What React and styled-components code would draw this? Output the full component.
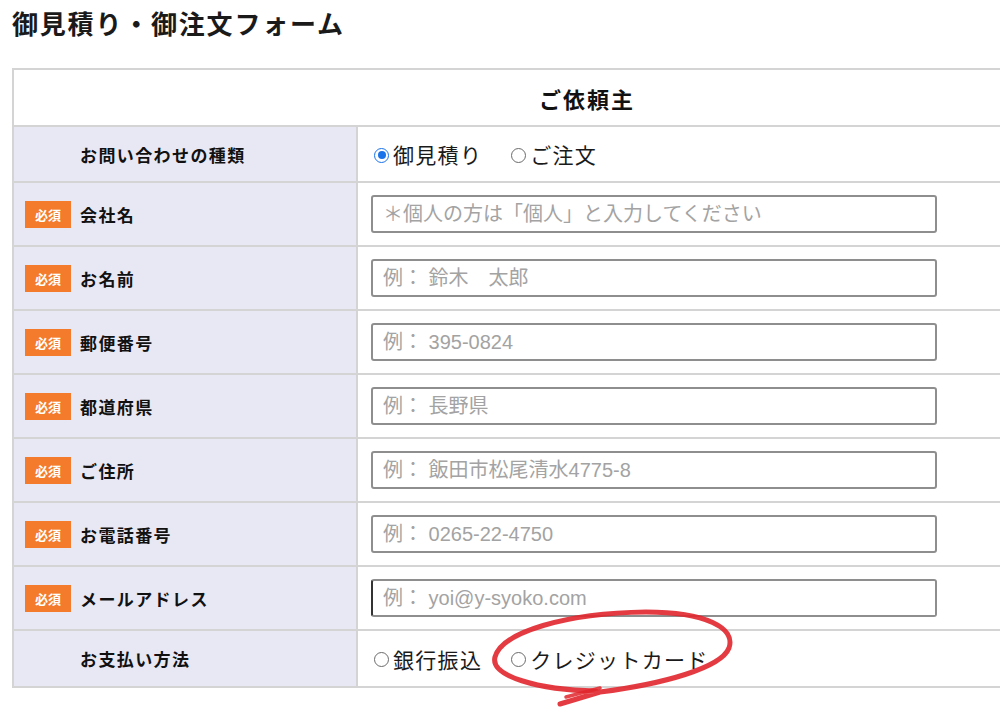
import React from 'react'
import styled, { createGlobalStyle } from 'styled-components'

const GlobalStyle = createGlobalStyle`
  html, body {
    margin: 0;
    padding: 0;
    background: #fff;
    overflow: hidden;
  }
  body {
    font-family: "Liberation Sans", "Noto Sans CJK JP", sans-serif;
    color: #111;
  }
`

const Page = styled.div`
  position: relative;
  width: 1000px;
  height: 714px;
  padding: 0 0 0 12px;
  box-sizing: border-box;
  overflow: hidden;
`

const Title = styled.h1`
  margin: 0;
  padding: 8px 0 0 0;
  height: 68px;
  box-sizing: border-box;
  font-size: 26px;
  line-height: 30px;
  font-weight: 700;
  letter-spacing: 1.8px;
  font-family: "Noto Sans CJK JP", sans-serif;
  color: #1a1a1a;
`

const Table = styled.div`
  width: 1146px;
  border-top: 2px solid #d4d4d4;
  border-left: 2px solid #d4d4d4;
  display: flex;
  flex-direction: column;
`

const HeadRow = styled.div`
  height: 57px;
  box-sizing: border-box;
  border-bottom: 2px solid #d4d4d4;
  display: flex;
  align-items: center;
  justify-content: center;
  font-family: "Noto Sans CJK JP", sans-serif;
  font-size: 22px;
  font-weight: 700;
  letter-spacing: 2px;
`

const Row = styled.div`
  display: grid;
  grid-template-columns: 344px 1fr;
  height: ${p => p.$h}px;
  box-sizing: border-box;
  border-bottom: 2px solid #d4d4d4;
`

const LabelCell = styled.div`
  background: #e8e8f4;
  border-right: 2px solid #d4d4d4;
  display: flex;
  align-items: center;
  gap: 9px;
  padding-left: 11px;
  font-family: "Noto Sans CJK JP", sans-serif;
  font-size: 17px;
  font-weight: 700;
  letter-spacing: 1.4px;
`

const Badge = styled.span`
  width: 46px;
  height: 27px;
  display: flex;
  align-items: center;
  justify-content: center;
  background: ${p => (p.$empty ? 'transparent' : '#f47b2b')};
  color: #fff;
  font-size: 13px;
  font-weight: 700;
  letter-spacing: 0;
`

const FieldCell = styled.div`
  display: flex;
  align-items: center;
  padding-left: 13px;
`

const Input = styled.input`
  width: 566px;
  height: 38px;
  box-sizing: border-box;
  border: 2px solid #8e8e8e;
  border-radius: 3px;
  padding: 0 0 0 10px;
  font-family: "Liberation Sans", "Noto Sans CJK JP", sans-serif;
  font-size: 20px;
  outline: none;
  border-left-color: ${p => (p.$caret ? '#333' : '#8e8e8e')};
  &::placeholder {
    color: #a3a3a3;
  }
`

const Choices = styled.div`
  display: flex;
  align-items: center;
  gap: 29px;
  padding-left: 3px;
  font-family: "Noto Sans CJK JP", sans-serif;
  font-size: 21px;
  letter-spacing: 1.3px;
`

const Choice = styled.label`
  display: flex;
  align-items: center;
  gap: 4px;
  color: #1a1a1a;
`

const Dot = styled.span`
  flex-shrink: 0;
  width: 15px;
  height: 15px;
  margin-top: 2px;
  box-sizing: border-box;
  border-radius: 50%;
  border: 1.5px solid ${p => (p.$on ? '#1a73e8' : '#6b6b6b')};
  display: flex;
  align-items: center;
  justify-content: center;
  &::after {
    content: '';
    width: 8px;
    height: 8px;
    border-radius: 50%;
    background: ${p => (p.$on ? '#1a73e8' : 'transparent')};
  }
`

const Scribble = styled.svg`
  position: absolute;
  left: 478px;
  top: 600px;
  pointer-events: none;
`

const fields = [
  ['会社名', '＊個人の方は「個人」と入力してください'],
  ['お名前', '例： 鈴木　太郎'],
  ['郵便番号', '例： 395-0824'],
  ['都道府県', '例： 長野県'],
  ['ご住所', '例： 飯田市松尾清水4775-8'],
  ['お電話番号', '例： 0265-22-4750'],
  ['メールアドレス', '例： yoi@y-syoko.com'],
]

function Radios({ items }) {
  return (
    <Choices>
      {items.map(([text, on]) => (
        <Choice key={text}>
          <Dot $on={on} />
          {text}
        </Choice>
      ))}
    </Choices>
  )
}

export default function App() {
  return (
    <Page>
      <GlobalStyle />
      <Title>御見積り・御注文フォーム</Title>
      <Table>
        <HeadRow>ご依頼主</HeadRow>
        <Row $h={56}>
          <LabelCell>
            <Badge $empty />
            お問い合わせの種類
          </LabelCell>
          <FieldCell>
            <Radios items={[['御見積り', true], ['ご注文', false]]} />
          </FieldCell>
        </Row>
        {fields.map(([label, ph], i) => (
          <Row $h={64} key={label}>
            <LabelCell>
              <Badge>必須</Badge>
              {label}
            </LabelCell>
            <FieldCell>
              <Input placeholder={ph} $caret={i === fields.length - 1} />
            </FieldCell>
          </Row>
        ))}
        <Row $h={57}>
          <LabelCell>
            <Badge $empty />
            お支払い方法
          </LabelCell>
          <FieldCell>
            <Radios items={[['銀行振込', false], ['クレジットカード', false]]} />
          </FieldCell>
        </Row>
      </Table>
      <Scribble width="280" height="114" viewBox="0 0 280 114">
        <path
          d="M 118 91 C 60 90, 12 76, 17 57 C 24 32, 88 13, 168 12 C 228 12, 258 28, 251 48 C 243 68, 185 84, 122 92 L 82 104"
          fill="none"
          stroke="#e0262c"
          strokeWidth="5"
          strokeLinecap="round"
          strokeLinejoin="round"
          opacity="0.9"
        />
        <path d="M 122 88 L 88 97" fill="none" stroke="#e0262c" strokeWidth="3.5" strokeLinecap="round" opacity="0.85" />
      </Scribble>
    </Page>
  )
}
